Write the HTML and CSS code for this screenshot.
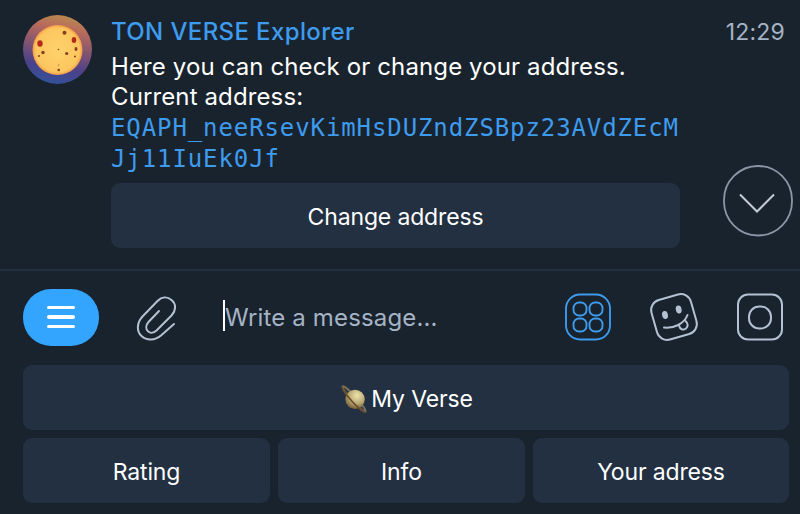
FILE: index.html
```html
<!DOCTYPE html>
<html lang="en">
<head>
    <meta charset="UTF-8">
    <meta name="viewport" content="width=device-width, initial-scale=1.0">
    <title>TON VERSE Explorer</title>
    <link rel="stylesheet" href="styles.css">
</head>
<body>
    <div class="chat">
        <div class="message">
            <svg class="avatar" viewBox="0 0 70 70">
                <defs>
                    <linearGradient id="ring" x1="0.6" y1="0" x2="0.4" y2="1">
                        <stop offset="0" stop-color="#b98a50"/>
                        <stop offset="0.2" stop-color="#b76a5c"/>
                        <stop offset="0.5" stop-color="#7d5272"/>
                        <stop offset="0.75" stop-color="#4b4189"/>
                        <stop offset="1" stop-color="#31529b"/>
                    </linearGradient>
                    <radialGradient id="moon">
                        <stop offset="0" stop-color="#ffd26c"/>
                        <stop offset="0.88" stop-color="#fcc65e"/>
                        <stop offset="1" stop-color="#f49a48"/>
                    </radialGradient>
                </defs>
                <circle cx="34.5" cy="34.5" r="34.5" fill="url(#ring)"/>
                <circle cx="34.5" cy="35" r="25" fill="url(#moon)"/>
                <g fill="#b5291c">
                    <ellipse cx="17" cy="28.5" rx="2.7" ry="3.2"/>
                    <ellipse cx="51" cy="25" rx="2.3" ry="3"/>
                </g>
                <g fill="#8a3d20">
                    <circle cx="41.5" cy="17.7" r="2"/>
                    <circle cx="20" cy="37.5" r="1.7"/>
                    <circle cx="16" cy="41" r="1"/>
                    <circle cx="43.7" cy="38.5" r="1.6"/>
                    <ellipse cx="53" cy="34" rx="1.5" ry="2"/>
                    <circle cx="52" cy="41.5" r="1"/>
                    <circle cx="35.5" cy="34.5" r="0.8"/>
                    <circle cx="35.7" cy="50" r="0.6"/>
                    <circle cx="35.7" cy="55" r="1.3"/>
                </g>
            </svg>
            <div class="content">
                <div class="header">
                    <span class="sender">TON VERSE Explorer</span>
                    <span class="time">12:29</span>
                </div>
                <div class="text">Here you can check or change your address.</div>
                <div class="text">Current address:</div>
                <div class="address">EQAPH_neeRsevKimHsDUZndZSBpz23AVdZEcM<br>Jj11IuEk0Jf</div>
                <button class="inline-button">Change address</button>
            </div>
            <button class="scroll-down">
                <svg width="70" height="72" viewBox="0 0 70 72" fill="none">
                    <rect x="1" y="1" width="68" height="69.5" rx="34" stroke="#8b97a6" stroke-width="1.8"/>
                    <path d="M17 29.5 L34 46.5 L51 29.5" stroke="#c3ccd6" stroke-width="2"/>
                </svg>
            </button>
        </div>

        <div class="input-bar">
            <button class="menu-button">
                <span></span>
                <span></span>
                <span></span>
            </button>
            <svg class="clip" width="42" height="48" viewBox="0 0 42 48" fill="none" stroke="#b3c1d3" stroke-width="2" stroke-linecap="round">
                <path d="M23 18 L12.5 29 C6.5 36 14 43.5 20.5 37.5 L35.5 22.5 C40.5 17 40 10.5 35.5 7 C31 3.2 25.5 4 21.5 8 L6.500 23.500 C0.500 30 0.500 38.500 5.500 43 C11 48 19 47.500 25 42.500 L38 31"/>
            </svg>
            <div class="input">Write a message...</div>
            <div class="icons">
                <svg width="48" height="48" viewBox="0 0 48 48" fill="none" stroke="#3d9aec" stroke-width="1.9">
                    <rect x="2" y="1.5" width="44" height="45" rx="14"/>
                    <rect x="9.500" y="9.500" width="13" height="13" rx="5.600"/>
                    <rect x="25.500" y="9.500" width="13" height="13" rx="5.600"/>
                    <rect x="9.500" y="25.500" width="13" height="13" rx="5.600"/>
                    <rect x="25.500" y="25.500" width="13" height="13" rx="5.600"/>
                </svg>
                <svg width="50" height="50" viewBox="0 0 50 50" fill="none" stroke="#b3c1d3" stroke-width="2" stroke-linecap="round">
                    <rect x="4.500" y="4.500" width="41" height="41" rx="10.500" transform="rotate(-16 25 25)"/>
                    <ellipse cx="16" cy="23" rx="2.900" ry="4" fill="#b3c1d3" stroke="none" transform="rotate(-12 16 23)"/>
                    <ellipse cx="29.700" cy="17.500" rx="2.900" ry="4" fill="#b3c1d3" stroke="none" transform="rotate(-12 29.700 17.500)"/>
                    <path d="M15 35.500 C25 36.500 35 32 38.500 23"/>
                    <path d="M30 33.500 C31 37.500 34 38.500 37 36.500 C39.500 34.500 39 31 36.500 29"/>
                </svg>
                <svg width="48" height="48" viewBox="0 0 48 48" fill="none" stroke="#b3c1d3" stroke-width="2">
                    <rect x="2" y="1.500" width="44" height="45" rx="10"/>
                    <rect x="13" y="13.500" width="22" height="22" rx="10.300"/>
                </svg>
            </div>
        </div>

        <div class="keyboard">
            <button class="key wide">
                <svg class="saturn" width="30" height="30" viewBox="0 0 30 30">
                    <defs>
                        <radialGradient id="planet" cx="0.6" cy="0.3" r="0.75">
                            <stop offset="0" stop-color="#eee5ac"/>
                            <stop offset="0.55" stop-color="#b9aa72"/>
                            <stop offset="1" stop-color="#695530"/>
                        </radialGradient>
                    </defs>
                    <g transform="rotate(48 15 15)">
                        <ellipse cx="15" cy="15" rx="17" ry="2.500" fill="none" stroke="#7d7059" stroke-width="2"/>
                        <circle cx="16" cy="14.500" r="9.700" fill="url(#planet)" transform="rotate(-48 16 14.500)"/>
                        <path d="M-2 15 A17 3 0 0 0 32 15" fill="none" stroke="#6b4a28" stroke-width="1.500"/>
                    </g>
                </svg>
                <span>My Verse</span>
            </button>
            <button class="key">Rating</button>
            <button class="key">Info</button>
            <button class="key">Your adress</button>
        </div>
    </div>
</body>
</html>
```
FILE: styles.css
```css
* {
    box-sizing: border-box;
}
body {
    margin: 0;
    background-color: #19232d;
    color: #ffffff;
    font-family: Inter, sans-serif;
    font-size: 24px;
    overflow: hidden;
}
button {
    border: none;
    padding: 0;
    color: #ffffff;
    font-family: inherit;
    cursor: pointer;
}
.chat {
    display: flex;
    flex-direction: column;
    height: 514px;
}
.message {
    position: relative;
    display: flex;
    height: 271px;
    padding: 15px 15px 0 23px;
    border-bottom: 2px solid #222f40;
}
.avatar {
    width: 70px;
    height: 70px;
    margin-right: 18px;
    flex-shrink: 0;
}
.content {
    flex-grow: 1;
}
.header {
    display: flex;
    justify-content: space-between;
    height: 36px;
    line-height: 34px;
}
.sender {
    color: #3e9bed;
    font-weight: 500;
    letter-spacing: 0.38px;
}
.time {
    color: #a5b3c4;
    font-size: 23px;
    letter-spacing: 0.2px;
    line-height: 35px;
}
.text {
    height: 30px;
    letter-spacing: 0.12px;
    line-height: 31px;
    white-space: nowrap;
}
.address {
    margin-top: 2px;
    color: #3e9bed;
    font-family: "DejaVu Sans Mono", monospace;
    font-size: 24px;
    letter-spacing: 0.9px;
    line-height: 31px;
    white-space: nowrap;
}
.inline-button {
    display: block;
    width: 569px;
    height: 65px;
    margin-top: 8px;
    padding-top: 3px;
    border-radius: 9px;
    background-color: #223042;
    font-size: 23px;
    letter-spacing: -0.15px;
}
.scroll-down {
    position: absolute;
    right: 7px;
    top: 165px;
    height: 72px;
    background: none;
}
.input-bar {
    display: flex;
    align-items: center;
    height: 94px;
    padding: 0 16px 2px 23px;
}
.menu-button {
    display: flex;
    flex-direction: column;
    align-items: center;
    justify-content: center;
    gap: 6px;
    width: 76px;
    height: 57px;
    border-radius: 28px;
    background-color: #33a5ff;
}
.menu-button span {
    width: 28px;
    height: 3.5px;
    border-radius: 2px;
    background-color: #ffffff;
}
.clip {
    margin-left: 37px;
}
.input {
    height: 31px;
    margin-left: 45px;
    margin-top: -3px;
    border-left: 2px solid #ffffff;
    color: #a5b3c4;
    letter-spacing: 0.15px;
    line-height: 36px;
    white-space: nowrap;
}
.icons {
    display: flex;
    align-items: center;
    gap: 37px;
    margin-left: auto;
}
.keyboard {
    display: grid;
    grid-template-columns: 247px 247px 256px;
    grid-auto-rows: 65px;
    gap: 8px;
    padding: 0 11px 0 23px;
}
.key {
    display: flex;
    align-items: center;
    justify-content: center;
    padding-top: 3px;
    border-radius: 9px;
    background-color: #223042;
    font-size: 23px;
    letter-spacing: -0.15px;
}
.wide {
    grid-column: 1 / 4;
}
.saturn {
    margin-right: 2px;
}
```
